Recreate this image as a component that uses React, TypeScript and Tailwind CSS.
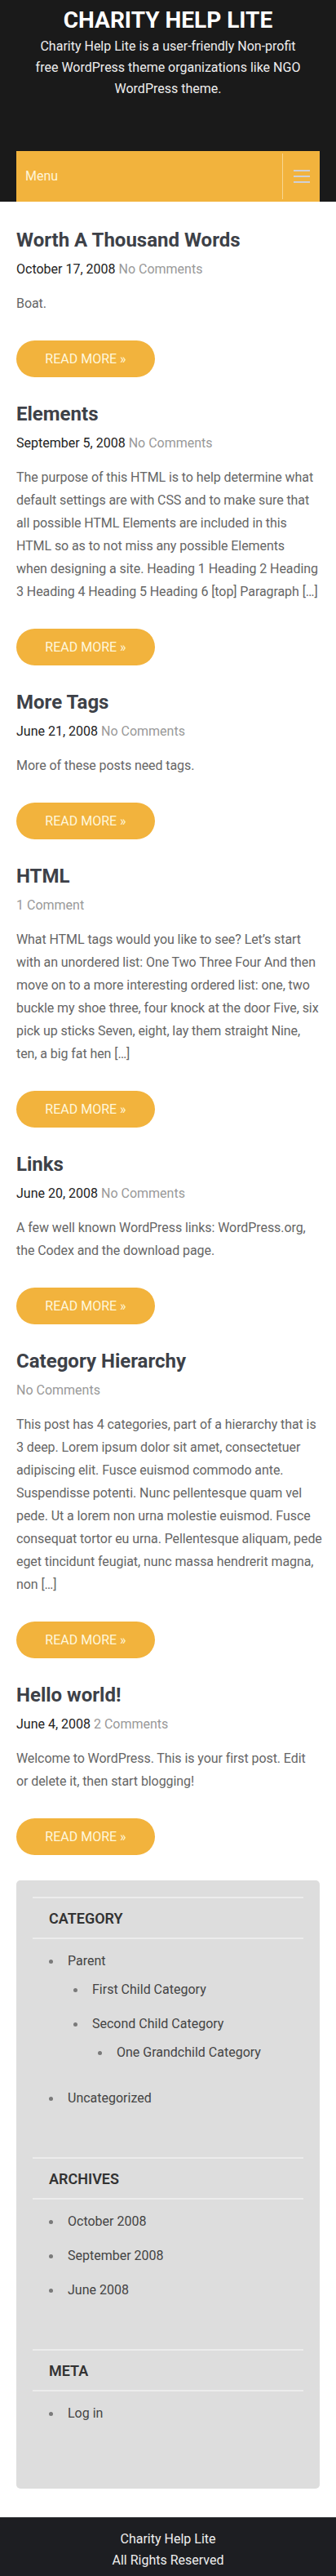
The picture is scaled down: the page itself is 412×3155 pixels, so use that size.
import React from 'react';

interface Post {
    title: string;
    date?: string;
    comments: string;
    // excerpt lines, broken where the theme's 372px column breaks them
    lines: string[];
}

interface CatItem {
    name: string;
    children?: CatItem[];
}

const posts: Post[] = [
    { title: 'Worth A Thousand Words', date: 'October 17, 2008', comments: 'No Comments', lines: ['Boat.'] },
    {
        title: 'Elements',
        date: 'September 5, 2008',
        comments: 'No Comments',
        lines: [
            'The purpose of this HTML is to help determine what',
            'default settings are with CSS and to make sure that',
            'all possible HTML Elements are included in this',
            'HTML so as to not miss any possible Elements',
            'when designing a site. Heading 1 Heading 2 Heading',
            '3 Heading 4 Heading 5 Heading 6 [top] Paragraph […]',
        ],
    },
    { title: 'More Tags', date: 'June 21, 2008', comments: 'No Comments', lines: ['More of these posts need tags.'] },
    {
        title: 'HTML',
        comments: '1 Comment',
        lines: [
            'What HTML tags would you like to see? Let’s start',
            'with an unordered list: One Two Three Four And then',
            'move on to a more interesting ordered list: one, two',
            'buckle my shoe three, four knock at the door Five, six',
            'pick up sticks Seven, eight, lay them straight Nine,',
            'ten, a big fat hen […]',
        ],
    },
    {
        title: 'Links',
        date: 'June 20, 2008',
        comments: 'No Comments',
        lines: ['A few well known WordPress links: WordPress.org,', 'the Codex and the download page.'],
    },
    {
        title: 'Category Hierarchy',
        comments: 'No Comments',
        lines: [
            'This post has 4 categories, part of a hierarchy that is',
            '3 deep. Lorem ipsum dolor sit amet, consectetuer',
            'adipiscing elit. Fusce euismod commodo ante.',
            'Suspendisse potenti. Nunc pellentesque quam vel',
            'pede. Ut a lorem non urna molestie euismod. Fusce',
            'consequat tortor eu urna. Pellentesque aliquam, pede',
            'eget tincidunt feugiat, nunc massa hendrerit magna,',
            'non […]',
        ],
    },
    {
        title: 'Hello world!',
        date: 'June 4, 2008',
        comments: '2 Comments',
        lines: ['Welcome to WordPress. This is your first post. Edit', 'or delete it, then start blogging!'],
    },
];

const categories: CatItem[] = [
    {
        name: 'Parent',
        children: [
            { name: 'First Child Category' },
            { name: 'Second Child Category', children: [{ name: 'One Grandchild Category' }] },
        ],
    },
    { name: 'Uncategorized' },
];

function ItemList({ items, nested = false }: { items: CatItem[]; nested?: boolean }) {
    return (
        <ul className={nested ? 'pl-[30px]' : 'pl-[20px] mt-[6px]'}>
            {items.map((item) => (
                <li key={item.name} className="py-[7px]">
                    <div className="h-[28px] flex items-center gap-[18px]">
                        <span className="w-[5px] h-[5px] rounded-full bg-[#7a7a7a] shrink-0" />
                        <a href="#" className="text-[16px] text-[#444444]">
                            {item.name}
                        </a>
                    </div>
                    {item.children && <ItemList items={item.children} nested />}
                </li>
            ))}
        </ul>
    );
}

function Widget({ title, children }: { title: string; children: React.ReactNode }) {
    return (
        <section className="mb-[51px]">
            <div className="border-y-2 border-[#ececec]">
                <h3 className="h-[48px] flex items-center px-[20px] text-[18px] font-semibold text-[#333333]">
                    {title}
                </h3>
            </div>
            {children}
        </section>
    );
}

export default function App() {
    return (
        <div className="min-h-screen bg-white font-['Roboto',sans-serif]">
            <header className="bg-[#1a1a1a] pt-[6px] text-center">
                <h1 className="text-[28px] leading-[38px] font-bold text-white">CHARITY HELP LITE</h1>
                <p className="mx-auto max-w-[336px] text-[16px] leading-[26px] text-[#eeeeee]">
                    Charity Help Lite is a user-friendly Non-profit free WordPress theme organizations like NGO WordPress theme.
                </p>
                <nav className="mt-[63px] mx-[20px] h-[62px] bg-[#f2b33d] flex items-center">
                    <span className="flex-1 pl-[11px] text-left text-[16px] text-[#fff5d8]">Menu</span>
                    <div className="w-px self-stretch my-[3px] bg-[#f8d690]" />
                    <button className="w-[45px] h-full flex flex-col items-center justify-center gap-[5px]">
                        <span className="block w-[20px] h-[2px] bg-[#cfd0d6]" />
                        <span className="block w-[20px] h-[2px] bg-[#cfd0d6]" />
                        <span className="block w-[20px] h-[2px] bg-[#cfd0d6]" />
                    </button>
                </nav>
            </header>

            <main className="px-[20px] pb-[35px]">
                {posts.map((post, index) => (
                    <article key={post.title} className={index === 0 ? 'pt-[29px]' : 'pt-[27px]'}>
                        <h2 className="text-[24px] leading-[36px] font-bold text-[#3d4148]">{post.title}</h2>
                        <div className="mt-[4px] text-[16px] leading-[28px]">
                            {post.date && <span className="text-[#222222]">{post.date} </span>}
                            <a href="#" className="text-[#999999]">
                                {post.comments}
                            </a>
                        </div>
                        <p className="mt-[14px] text-[16px] leading-[28px] tracking-[-0.08px] text-[#666666]">
                            {post.lines.map((line) => (
                                <span key={line} className="block whitespace-nowrap">
                                    {line}
                                </span>
                            ))}
                        </p>
                        <button className="mt-[31px] h-[45px] w-[170px] rounded-full bg-[#f2b33d] text-[16px] text-[#fff7dc] uppercase">
                            Read More »
                        </button>
                    </article>
                ))}

                <aside className="mt-[31px] flex flex-col rounded-[5px] bg-[#dddddd] px-[20px] pt-[20px] pb-[20px]">
                    <Widget title="CATEGORY">
                        <ItemList items={categories} />
                    </Widget>
                    <Widget title="ARCHIVES">
                        <ItemList items={[{ name: 'October 2008' }, { name: 'September 2008' }, { name: 'June 2008' }]} />
                    </Widget>
                    <Widget title="META">
                        <ItemList items={[{ name: 'Log in' }]} />
                    </Widget>
                </aside>
            </main>

            <footer className="bg-[#1d1e22] border-t border-[#2e2f33] pt-[13px] pb-[16px] text-center text-[16px] leading-[26px] text-[#eeeeee]">
                <p>Charity Help Lite</p>
                <p>All Rights Reserved</p>
            </footer>
        </div>
    );
}
